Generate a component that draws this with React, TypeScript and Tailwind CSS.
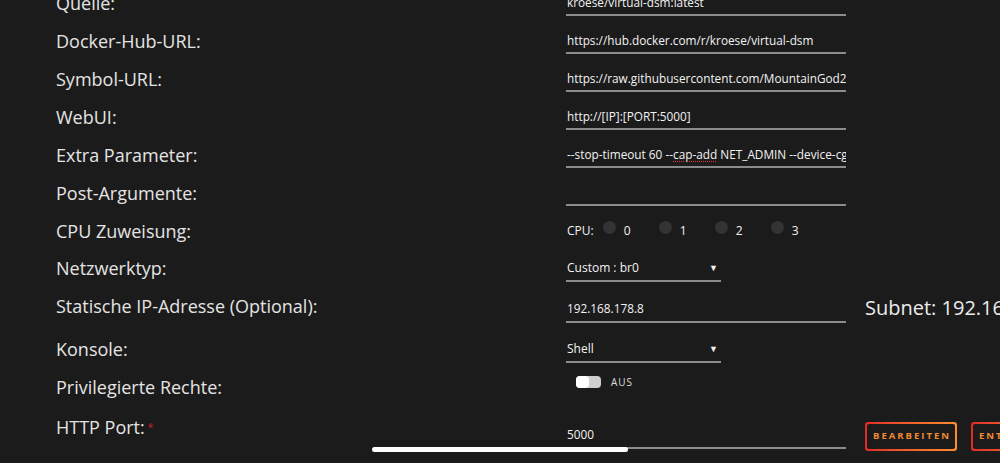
const label = "w-[566px] shrink-0 pl-[56px] text-[18px] leading-[22px] text-[#e4e4e4]";
const field =
  "w-[280px] h-[26px] shrink-0 flex items-center overflow-hidden whitespace-nowrap border-b-2 border-[#8c8c8c] pl-px text-[11.8px] text-[#f2f2f2]";

function TextRow({ name, value }: { name: string; value: React.ReactNode }) {
  return (
    <div className="flex h-[38px] items-center">
      <div className={label}>{name}</div>
      <div className={field + " pt-[1px]"}>{value}</div>
    </div>
  );
}

function SelectBox({ value }: { value: string }) {
  return (
    <div className="flex h-[26px] w-[155px] items-center justify-between border-b-2 border-[#8c8c8c] pl-px pr-[3px] text-[12px] text-[#f2f2f2]">
      <span>{value}</span>
      <span className="text-[9px]">▼</span>
    </div>
  );
}

function GradientButton({ text }: { text: string }) {
  return (
    <div className="rounded-[3px] bg-gradient-to-r from-[#e22828] to-[#ff8c2f] p-[2px]">
      <div className="flex h-[25px] items-center rounded-[2px] bg-[#1c1b1b] pl-[6px] pr-[4px] text-[9.5px] font-bold tracking-[2px] text-[#f08a32]">
        {text}
      </div>
    </div>
  );
}

export default function App() {
  const cpus = ["0", "1", "2", "3"];

  return (
    <div className="relative h-[463px] w-[1000px] overflow-hidden bg-[#1c1b1b] font-['Open_Sans',sans-serif]">
      <div className="-mt-[16px]">
        <TextRow name="Quelle:" value="kroese/virtual-dsm:latest" />
        <TextRow name="Docker-Hub-URL:" value="https://hub.docker.com/r/kroese/virtual-dsm" />
        <TextRow
          name="Symbol-URL:"
          value="https://raw.githubusercontent.com/MountainGod2/unraid-templates/main/icons/virtual-dsm.png"
        />
        <TextRow name="WebUI:" value="http://[IP]:[PORT:5000]" />
        <TextRow
          name="Extra Parameter:"
          value={
            <span>
              --stop-timeout 60 --
              <span className="underline decoration-dotted decoration-[#d33] underline-offset-2">cap-add</span>
              {" NET_ADMIN --device-cgroup-rule='c *:* rwm'"}
            </span>
          }
        />
        <TextRow name="Post-Argumente:" value="" />

        {/* CPU pinning */}
        <div className="flex h-[38px] items-center">
          <div className={label}>CPU Zuweisung:</div>
          <div className="flex items-center pl-px text-[12px] text-[#f2f2f2]">
            <span className="mr-[9px]">CPU:</span>
            {cpus.map((c) => (
              <div key={c} className="flex w-[56px] items-center">
                <span className="-mt-[7px] h-[13px] w-[13px] rounded-full bg-[#333333]" />
                <span className="ml-[8px]">{c}</span>
              </div>
            ))}
          </div>
        </div>

        <div className="flex h-[36px] items-center">
          <div className={label}>Netzwerktyp:</div>
          <div className="pt-[1px]">
            <SelectBox value="Custom : br0" />
          </div>
        </div>

        <div className="flex h-[40px] items-center">
          <div className={label}>Statische IP-Adresse (Optional):</div>
          <div className={field + " mt-[7px]"}>192.168.178.8</div>
          <div className="ml-[19px] whitespace-nowrap pt-[3px] text-[20px] text-[#ececec]">
            Subnet: 192.168.178.0/24
          </div>
        </div>

        <div className="flex h-[46px] items-center">
          <div className={label}>Konsole:</div>
          <div className="pt-[1px]">
            <SelectBox value="Shell" />
          </div>
        </div>

        <div className="flex h-[30px] items-center">
          <div className={label}>Privilegierte Rechte:</div>
          <div className="-mt-[10px] ml-[10px] flex items-center">
            <div className="flex h-[12px] w-[25px] items-center rounded-[4px] bg-[#cfcfcf]">
              <div className="h-[12px] w-[13px] rounded-[4px] bg-white" />
            </div>
            <span className="ml-[10px] text-[10px] tracking-[1px] text-[#dddddd]">AUS</span>
          </div>
        </div>

        <div className="flex h-[50px] items-center">
          <div className={label}>
            HTTP Port:<span className="ml-[3px] align-[3px] text-[10px] text-[#d42020]">*</span>
          </div>
          <div className={field + " mt-[18px]"}>5000</div>
          <div className="ml-[19px] mt-[18px] flex gap-[14px]">
            <GradientButton text="BEARBEITEN" />
            <GradientButton text="ENTFERNEN" />
          </div>
        </div>
      </div>

      {/* iOS home indicator */}
      <div className="absolute bottom-[11px] left-[372px] h-[5px] w-[256px] rounded-full bg-white" />
    </div>
  );
}
